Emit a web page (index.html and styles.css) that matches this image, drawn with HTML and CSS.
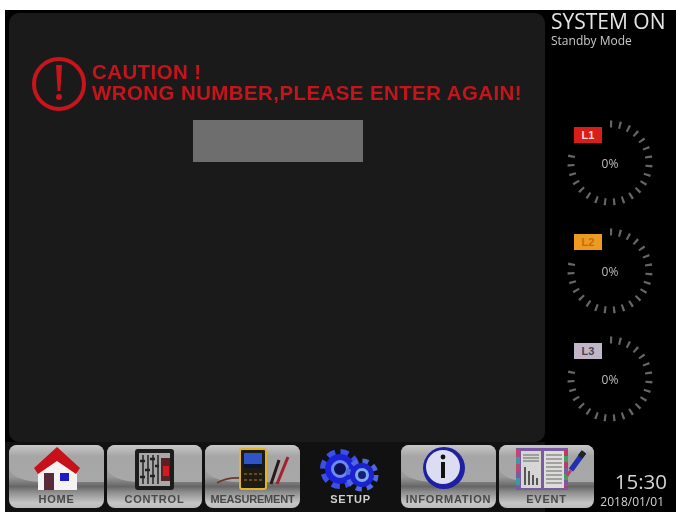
FILE: index.html
```html
<!DOCTYPE html>
<html lang="en">
<head>
<meta charset="utf-8">
<title>System panel</title>
<link rel="stylesheet" href="styles.css">
</head>
<body>
<div class="screen">
  <div class="top">
    <main class="panel">
      <div class="alert">
        <svg class="alert-icon" viewBox="0 0 56 56" aria-hidden="true">
          <circle cx="28" cy="28" r="25" fill="none" stroke="#c8141c" stroke-width="4"/>
          <path d="M25 9 h6 L29.4 35 h-2.8 Z" fill="#c8141c"/>
          <circle cx="28" cy="41" r="3" fill="#c8141c"/>
        </svg>
        <p class="alert-text">CAUTION !<br>WRONG NUMBER,PLEASE ENTER AGAIN!</p>
      </div>
      <div class="entry"></div>
    </main>
    <aside class="side">
      <div class="state">SYSTEM ON</div>
      <div class="mode">Standby Mode</div>
      <div class="gauges">
        <div class="gauge">
          <svg class="dial" viewBox="0 0 96 96" aria-hidden="true"><path class="ticks" d="M48 9 A39 39 0 1 1 10.3 38"/></svg>
          <span class="pct">0%</span>
          <span class="badge l1">L1</span>
        </div>
        <div class="gauge">
          <svg class="dial" viewBox="0 0 96 96" aria-hidden="true"><path class="ticks" d="M48 9 A39 39 0 1 1 10.3 38"/></svg>
          <span class="pct">0%</span>
          <span class="badge l2">L2</span>
        </div>
        <div class="gauge">
          <svg class="dial" viewBox="0 0 96 96" aria-hidden="true"><path class="ticks" d="M48 9 A39 39 0 1 1 10.3 38"/></svg>
          <span class="pct">0%</span>
          <span class="badge l3">L3</span>
        </div>
      </div>
    </aside>
  </div>
  <nav class="nav">
    <div class="btn">
      <svg class="ico" viewBox="0 0 95 46" aria-hidden="true">
        <polygon points="29,25 48,12 68,25 68,44 29,44" fill="#f4f2f2"/>
        <rect x="35" y="27" width="10" height="17" fill="#5a2a38"/>
        <rect x="51" y="27" width="9" height="8" fill="#1c1cc8"/>
        <polygon points="48,1 71,22 67,28 48,15 29,28 25,22" fill="#c8101a"/>
      </svg>
      <span class="lbl">HOME</span>
    </div>
    <div class="btn">
      <svg class="ico" viewBox="0 0 95 46" aria-hidden="true">
        <rect x="28" y="3" width="39" height="41" rx="3" fill="#1c1c1c"/>
        <rect x="32" y="7" width="31" height="33" fill="#a8a8a8"/>
        <path d="M36 9 V38 M41 9 V38 M46 9 V38 M51 9 V38" stroke="#2a2a2a" stroke-width="1.6"/>
        <path d="M33 15 h5 M38 24 h5 M43 13 h5 M33 31 h5 M43 30 h5 M48 20 h4" stroke="#222" stroke-width="2.4"/>
        <rect x="54" y="12" width="9" height="23" fill="#5a2024"/>
        <rect x="56" y="20" width="6" height="10" fill="#d8181c"/>
      </svg>
      <span class="lbl">CONTROL</span>
    </div>
    <div class="btn">
      <svg class="ico" viewBox="0 0 95 46" aria-hidden="true">
        <path d="M12 37 Q22 31 36 32" fill="none" stroke="#6a3a30" stroke-width="1.8"/>
        <path d="M66 38 L74 14" stroke="#2a1a1a" stroke-width="3"/>
        <path d="M72 38 L83 11" stroke="#a52030" stroke-width="3"/>
        <rect x="35" y="3" width="26" height="40" rx="2" fill="#1e1a14" stroke="#e0b428" stroke-width="2"/>
        <rect x="39" y="7" width="18" height="15" fill="#2d55c8"/>
        <rect x="39" y="18" width="18" height="4" fill="#0c1430"/>
        <path d="M39 28 h18 M39 34 h18" stroke="#6a4a18" stroke-width="2" stroke-dasharray="3 2"/>
      </svg>
      <span class="lbl tight">MEASUREMENT</span>
    </div>
    <div class="btn flat">
      <svg class="ico" viewBox="0 0 95 46" aria-hidden="true">
        <circle cx="37" cy="23" r="17" fill="none" stroke="#3c50e8" stroke-width="6" stroke-dasharray="8 5.35"/>
        <circle cx="37" cy="23" r="15" fill="#1c22d8"/>
        <circle cx="37" cy="23" r="7.5" fill="#101050" stroke="#6a8cf0" stroke-width="3"/>
        <circle cx="59" cy="29" r="14" fill="none" stroke="#5068e0" stroke-width="5" stroke-dasharray="6 5"/>
        <circle cx="59" cy="29" r="12" fill="#1c22d0"/>
        <circle cx="59" cy="29" r="5.5" fill="#142070" stroke="#7ea8f0" stroke-width="3"/>
      </svg>
      <span class="lbl">SETUP</span>
    </div>
    <div class="btn">
      <svg class="ico" viewBox="0 0 95 46" aria-hidden="true">
        <circle cx="43" cy="22" r="21" fill="#1f1fa4"/>
        <circle cx="42" cy="21" r="17" fill="#dcdcf2"/>
        <circle cx="42" cy="11" r="2.4" fill="#111"/>
        <rect x="40" y="16" width="4" height="16" fill="#111"/>
      </svg>
      <span class="lbl">INFORMATION</span>
    </div>
    <div class="btn">
      <svg class="ico" viewBox="0 0 95 46" aria-hidden="true">
        <rect x="17" y="2" width="52" height="42" fill="#7a5aa0"/>
        <path d="M19 4 V42" stroke="#c04870" stroke-width="4" stroke-dasharray="7 7"/>
        <path d="M19 11 V42" stroke="#3a9aa0" stroke-width="4" stroke-dasharray="7 14"/>
        <path d="M67 4 V42" stroke="#b83a68" stroke-width="4" stroke-dasharray="6 6"/>
        <path d="M67 10 V42" stroke="#40a060" stroke-width="4" stroke-dasharray="6 12"/>
        <rect x="22" y="5" width="20" height="37" fill="#d6d6d4"/>
        <rect x="45" y="5" width="20" height="37" fill="#dcdcda"/>
        <path d="M24 9 h16 M24 12 h16 M24 15 h16 M47 9 h16 M47 13 h16 M47 17 h16 M47 21 h16 M47 25 h16 M47 29 h16 M47 33 h16 M47 37 h16" stroke="#666" stroke-width="1.2"/>
        <path d="M26 39 V21 M30 39 V25 M34 39 V29 M38 39 V32" stroke="#555" stroke-width="2"/>
        <path d="M85 6 L72 24" stroke="#2030b0" stroke-width="5.5"/>
        <path d="M85 6 L81 11" stroke="#222" stroke-width="5.5"/>
        <path d="M72 24 L68 30" stroke="#c04070" stroke-width="3"/>
      </svg>
      <span class="lbl">EVENT</span>
    </div>
    <div class="clock">
      <div class="time">15:30</div>
      <div class="date">2018/01/01</div>
    </div>
  </nav>
</div>
</body>
</html>
```
FILE: styles.css
```css
html, body { margin: 0; height: 100%; background: #fff; }
body { padding: 10px 0 0 5px; box-sizing: border-box; overflow: hidden; }
.screen {
  height: 502px;
  background: #000;
  display: flex;
  flex-direction: column;
  filter: blur(0.6px);
  font-family: "Liberation Sans", Arial, sans-serif;
}
.top { display: flex; height: 432px; padding: 3px 0 0 4px; box-sizing: border-box; }
.panel {
  width: 536px;
  height: 429px;
  background: #1a1a1a;
  border-radius: 10px;
  padding-top: 42px;
  box-sizing: border-box;
}
.alert { display: flex; align-items: center; gap: 5px; margin-left: 22px; height: 58px; }
.alert-icon { width: 56px; height: 56px; flex: none; }
.alert-text {
  margin: 0 0 4px;
  color: #c4141c;
  font-weight: bold;
  font-size: 20.5px;
  letter-spacing: 0.4px;
  line-height: 21px;
  white-space: nowrap;
}
.entry { width: 170px; height: 42px; margin: 7px 0 0 184px; background: #6e6e6e; }
.side { flex: 1; color: #ddd; padding-left: 6px; }
.state { font-family: "Open Sans", sans-serif; font-size: 21px; line-height: 22px; margin-top: -3px; color: #e4e4e4; }
.mode { font-family: "Open Sans", sans-serif; font-size: 12px; line-height: 14px; color: #c8c8c8; margin-top: 2px; }
.gauges { margin: 67px 0 0 11px; display: flex; flex-direction: column; gap: 12px; }
.gauge { position: relative; width: 96px; height: 96px; display: grid; place-items: center; }
.dial { position: absolute; inset: 0; }
.ticks { fill: none; stroke: #666; stroke-width: 7; stroke-dasharray: 2.2 6.8; }
.pct { font-family: "Open Sans", sans-serif; font-size: 12px; color: #bdbdbd; }
.badge {
  position: absolute;
  left: 12px;
  top: 12px;
  width: 28px;
  height: 16px;
  font-size: 11px;
  font-weight: bold;
  line-height: 16px;
  text-align: center;
}
.l1 { background: #d81e1a; color: #f4d8d0; }
.l2 { background: #ee9a22; color: #c86a10; top: 11px; }
.l3 { background: #c0b6c8; color: #4a4450; }
.nav {
  flex: 1;
  display: flex;
  gap: 3px;
  padding: 3px 0 4px 4px;
  background: linear-gradient(90deg, #111 540px, #000 540px);
}
.btn {
  position: relative;
  width: 95px;
  height: 63px;
  flex: none;
  border-radius: 8px;
  background: linear-gradient(#9a9a9a 0, #9a9a9a 50%, #666 66%, #8a8a8a 74%, #c6c6c6 92%, #bbb 100%);
  display: flex;
  flex-direction: column;
  align-items: center;
}
.btn::before {
  content: "";
  position: absolute;
  left: 0;
  right: 0;
  top: 0;
  height: 37px;
  border-radius: 8px 8px 0 34px / 8px 8px 0 14px;
  background: linear-gradient(#c8c8c8, #a6a6a6 30%, #a8a8a8);
}
.btn.flat { background: none; }
.btn.flat::before { display: none; }
.ico { position: relative; width: 95px; height: 46px; margin-top: 1px; flex: none; overflow: visible; }
.lbl {
  position: relative;
  margin-top: 1px;
  font-size: 11px;
  line-height: 13px;
  font-weight: bold;
  letter-spacing: 0.8px;
  color: #484848;
  white-space: nowrap;
}
.lbl.tight { letter-spacing: -0.2px; }
.flat .lbl { color: #cfcfcf; }
.clock { margin-left: auto; padding-right: 9px; text-align: right; color: #d4d4d4; font-family: "Open Sans", sans-serif; }
.time { font-size: 20.5px; line-height: 22px; margin-top: 25px; }
.date { font-size: 12px; line-height: 13px; margin-top: 3px; margin-right: 3px; }
```
